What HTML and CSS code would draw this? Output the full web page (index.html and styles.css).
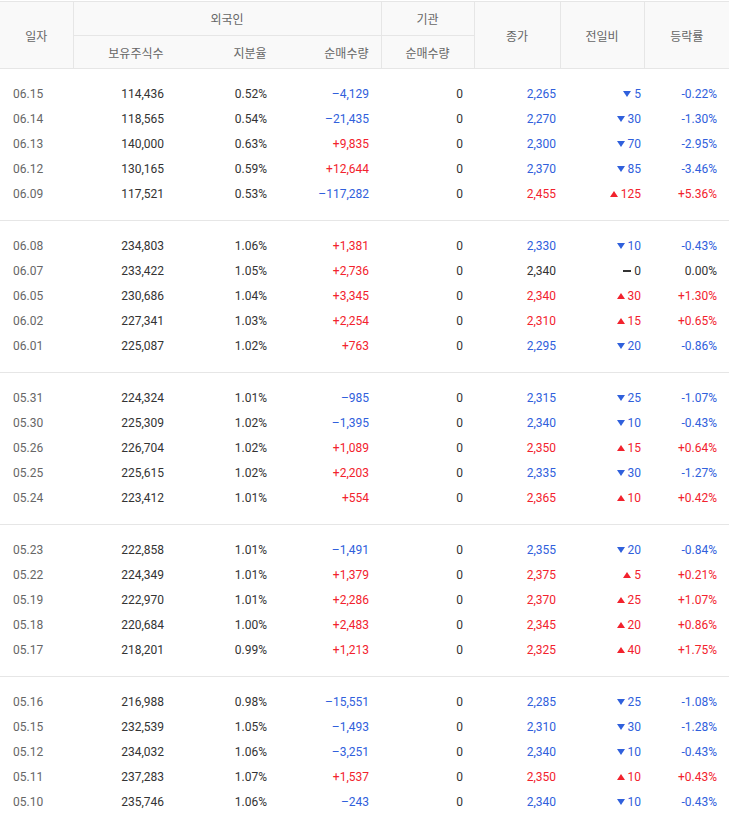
FILE: index.html
```html
<!DOCTYPE html>
<html lang="ko">
<head>
<meta charset="utf-8">
<title>외국인·기관 순매매</title>
<link rel="stylesheet" href="styles.css">
</head>
<body>
<div class="wrap">
<table class="tbl">
  <colgroup>
    <col class="c-date"><col class="c-hold"><col class="c-ratio"><col class="c-fnet"><col class="c-inet"><col class="c-close"><col class="c-diff"><col class="c-rate">
  </colgroup>
  <thead>
    <tr class="h1">
      <th rowspan="2" class="th-date">일자</th>
      <th colspan="3">외국인</th>
      <th>기관</th>
      <th rowspan="2">종가</th>
      <th rowspan="2">전일비</th>
      <th rowspan="2">등락률</th>
    </tr>
    <tr class="h2">
      <th class="sub">보유주식수</th>
      <th class="sub">지분율</th>
      <th class="sub">순매수량</th>
      <th>순매수량</th>
    </tr>
  </thead>
  <tbody>
    <tr><td class="d">06.15</td><td>114,436</td><td>0.52%</td><td class="b">&ndash;4,129</td><td>0</td><td class="b cl">2,265</td><td class="b df"><i class="dn"></i>5</td><td class="b rt">-0.22%</td></tr>
    <tr><td class="d">06.14</td><td>118,565</td><td>0.54%</td><td class="b">&ndash;21,435</td><td>0</td><td class="b cl">2,270</td><td class="b df"><i class="dn"></i>30</td><td class="b rt">-1.30%</td></tr>
    <tr><td class="d">06.13</td><td>140,000</td><td>0.63%</td><td class="r">+9,835</td><td>0</td><td class="b cl">2,300</td><td class="b df"><i class="dn"></i>70</td><td class="b rt">-2.95%</td></tr>
    <tr><td class="d">06.12</td><td>130,165</td><td>0.59%</td><td class="r">+12,644</td><td>0</td><td class="b cl">2,370</td><td class="b df"><i class="dn"></i>85</td><td class="b rt">-3.46%</td></tr>
    <tr><td class="d">06.09</td><td>117,521</td><td>0.53%</td><td class="b">&ndash;117,282</td><td>0</td><td class="r cl">2,455</td><td class="r df"><i class="up"></i>125</td><td class="r rt">+5.36%</td></tr>
  </tbody>
  <tbody>
    <tr><td class="d">06.08</td><td>234,803</td><td>1.06%</td><td class="r">+1,381</td><td>0</td><td class="b cl">2,330</td><td class="b df"><i class="dn"></i>10</td><td class="b rt">-0.43%</td></tr>
    <tr><td class="d">06.07</td><td>233,422</td><td>1.05%</td><td class="r">+2,736</td><td>0</td><td class="cl">2,340</td><td class="df"><i class="eq"></i>0</td><td class="rt">0.00%</td></tr>
    <tr><td class="d">06.05</td><td>230,686</td><td>1.04%</td><td class="r">+3,345</td><td>0</td><td class="r cl">2,340</td><td class="r df"><i class="up"></i>30</td><td class="r rt">+1.30%</td></tr>
    <tr><td class="d">06.02</td><td>227,341</td><td>1.03%</td><td class="r">+2,254</td><td>0</td><td class="r cl">2,310</td><td class="r df"><i class="up"></i>15</td><td class="r rt">+0.65%</td></tr>
    <tr><td class="d">06.01</td><td>225,087</td><td>1.02%</td><td class="r">+763</td><td>0</td><td class="b cl">2,295</td><td class="b df"><i class="dn"></i>20</td><td class="b rt">-0.86%</td></tr>
  </tbody>
  <tbody>
    <tr><td class="d">05.31</td><td>224,324</td><td>1.01%</td><td class="b">&ndash;985</td><td>0</td><td class="b cl">2,315</td><td class="b df"><i class="dn"></i>25</td><td class="b rt">-1.07%</td></tr>
    <tr><td class="d">05.30</td><td>225,309</td><td>1.02%</td><td class="b">&ndash;1,395</td><td>0</td><td class="b cl">2,340</td><td class="b df"><i class="dn"></i>10</td><td class="b rt">-0.43%</td></tr>
    <tr><td class="d">05.26</td><td>226,704</td><td>1.02%</td><td class="r">+1,089</td><td>0</td><td class="r cl">2,350</td><td class="r df"><i class="up"></i>15</td><td class="r rt">+0.64%</td></tr>
    <tr><td class="d">05.25</td><td>225,615</td><td>1.02%</td><td class="r">+2,203</td><td>0</td><td class="b cl">2,335</td><td class="b df"><i class="dn"></i>30</td><td class="b rt">-1.27%</td></tr>
    <tr><td class="d">05.24</td><td>223,412</td><td>1.01%</td><td class="r">+554</td><td>0</td><td class="r cl">2,365</td><td class="r df"><i class="up"></i>10</td><td class="r rt">+0.42%</td></tr>
  </tbody>
  <tbody>
    <tr><td class="d">05.23</td><td>222,858</td><td>1.01%</td><td class="b">&ndash;1,491</td><td>0</td><td class="b cl">2,355</td><td class="b df"><i class="dn"></i>20</td><td class="b rt">-0.84%</td></tr>
    <tr><td class="d">05.22</td><td>224,349</td><td>1.01%</td><td class="r">+1,379</td><td>0</td><td class="r cl">2,375</td><td class="r df"><i class="up"></i>5</td><td class="r rt">+0.21%</td></tr>
    <tr><td class="d">05.19</td><td>222,970</td><td>1.01%</td><td class="r">+2,286</td><td>0</td><td class="r cl">2,370</td><td class="r df"><i class="up"></i>25</td><td class="r rt">+1.07%</td></tr>
    <tr><td class="d">05.18</td><td>220,684</td><td>1.00%</td><td class="r">+2,483</td><td>0</td><td class="r cl">2,345</td><td class="r df"><i class="up"></i>20</td><td class="r rt">+0.86%</td></tr>
    <tr><td class="d">05.17</td><td>218,201</td><td>0.99%</td><td class="r">+1,213</td><td>0</td><td class="r cl">2,325</td><td class="r df"><i class="up"></i>40</td><td class="r rt">+1.75%</td></tr>
  </tbody>
  <tbody>
    <tr><td class="d">05.16</td><td>216,988</td><td>0.98%</td><td class="b">&ndash;15,551</td><td>0</td><td class="b cl">2,285</td><td class="b df"><i class="dn"></i>25</td><td class="b rt">-1.08%</td></tr>
    <tr><td class="d">05.15</td><td>232,539</td><td>1.05%</td><td class="b">&ndash;1,493</td><td>0</td><td class="b cl">2,310</td><td class="b df"><i class="dn"></i>30</td><td class="b rt">-1.28%</td></tr>
    <tr><td class="d">05.12</td><td>234,032</td><td>1.06%</td><td class="b">&ndash;3,251</td><td>0</td><td class="b cl">2,340</td><td class="b df"><i class="dn"></i>10</td><td class="b rt">-0.43%</td></tr>
    <tr><td class="d">05.11</td><td>237,283</td><td>1.07%</td><td class="r">+1,537</td><td>0</td><td class="r cl">2,350</td><td class="r df"><i class="up"></i>10</td><td class="r rt">+0.43%</td></tr>
    <tr><td class="d">05.10</td><td>235,746</td><td>1.06%</td><td class="b">&ndash;243</td><td>0</td><td class="b cl">2,340</td><td class="b df"><i class="dn"></i>10</td><td class="b rt">-0.43%</td></tr>
  </tbody>
</table>
</div>
</body>
</html>
```
FILE: styles.css
```css
html, body {
  margin: 0;
  padding: 0;
  background: #fff;
}
body {
  font-family: Roboto, "Noto Sans CJK KR", "Noto Sans", sans-serif;
  font-size: 12px;
  color: #333;
}
.wrap {
  width: 729px;
  padding-top: 1px;
}
.tbl {
  width: 729px;
  border-collapse: collapse;
  table-layout: fixed;
}
.c-date { width: 73px; }
.c-hold { width: 103px; }
.c-ratio { width: 103px; }
.c-fnet { width: 102px; }
.c-inet { width: 93px; }
.c-close { width: 86px; }
.c-diff { width: 84px; }
.c-rate { width: 85px; }

thead th {
  background: #f9f9f9;
  color: #666;
  font-weight: normal;
  font-size: 12px;
  text-align: center;
  border: 1px solid #e6e6e6;
  padding: 0;
}
thead th:first-child { border-left: 0; }
thead th:last-child { border-right: 0; }
.h1 th { height: 33px; }
.h2 th { height: 32px; border-right-color: transparent; }
.h2 th:nth-child(3) { border-right-color: #e6e6e6; }
.h2 th.sub { text-align: right; padding-right: 12px; }
.h2 th:first-child { border-left-color: #e6e6e6; }

tbody + tbody { border-top: 1px solid #e6e6e6; }
tbody td {
  height: 25px;
  padding: 0 12px 0 0;
  text-align: right;
  white-space: nowrap;
  line-height: 25px;
}
tbody tr:first-child td { padding-top: 13px; }
tbody tr:last-child td { padding-bottom: 13px; }
td.d { text-align: left; padding-left: 13px; padding-right: 0; color: #666; }
td:nth-child(5) { padding-right: 11px; }
td.cl { padding-right: 4px; }
td.df { padding-right: 3px; }
td.rt { padding-right: 12px; }
.b { color: #3060dc; }
.r { color: #f2222d; }

.dn, .up, .eq {
  display: inline-block;
  vertical-align: middle;
  margin-right: 3px;
  position: relative;
  top: -1px;
}
.dn {
  border-left: 4px solid transparent;
  border-right: 4px solid transparent;
  border-top: 6px solid #3060dc;
}
.up {
  border-left: 4px solid transparent;
  border-right: 4px solid transparent;
  border-bottom: 6px solid #f2222d;
}
.eq {
  width: 8px;
  height: 2px;
  background: #333;
}
```
